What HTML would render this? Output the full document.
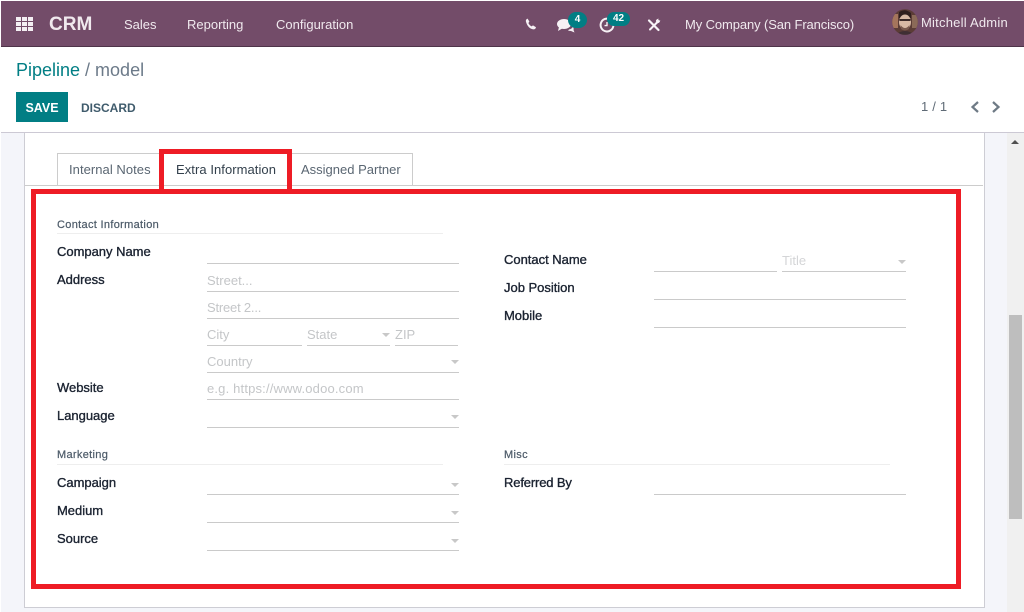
<!DOCTYPE html>
<html><head><meta charset="utf-8">
<style>
html,body{margin:0;padding:0;width:1024px;height:612px;overflow:hidden;background:#fff;font-family:"Liberation Sans",sans-serif;}
.a,.t,.l,.p,.u,.c,.h,.n{position:absolute;}
.t,.l,.p,.h,.n{white-space:nowrap;line-height:16px;}
.n{color:#f0e9ee;font-size:13px;top:17px;}
.l{font-size:13px;color:#1a2230;-webkit-text-stroke:.35px #1a2230;letter-spacing:-.02px;}
.p{font-size:13px;color:#c4c6c8;}
.h{font-size:11px;color:#4c5a68;-webkit-text-stroke:.2px #4c5a68;letter-spacing:.32px;}
.u{height:1px;background:#cacaca;}
.c{width:0;height:0;border-left:4px solid transparent;border-right:4px solid transparent;border-top:4px solid #c8c8c8;}
.r{position:absolute;background:#ee1c25;}
.tab{position:absolute;top:153px;height:32px;box-sizing:border-box;border:1px solid #ccc;border-bottom:0;background:#fff;}
</style></head>
<body>
<!-- navbar -->
<div class="a" style="left:1px;top:1px;width:1023px;height:45px;background:#734c69;border-bottom:1px solid #4e3449;"></div>
<svg class="a" style="left:16px;top:17px" width="18" height="15" viewBox="0 0 18 15" fill="#f4eff3">
<rect x="0" y="0" width="5" height="4"/><rect x="6" y="0" width="5" height="4"/><rect x="12" y="0" width="5" height="4"/>
<rect x="0" y="5" width="5" height="4"/><rect x="6" y="5" width="5" height="4"/><rect x="12" y="5" width="5" height="4"/>
<rect x="0" y="10" width="5" height="4"/><rect x="6" y="10" width="5" height="4"/><rect x="12" y="10" width="5" height="4"/>
</svg>
<div class="n" style="left:49px;top:14px;font-size:19px;line-height:22px;font-weight:bold;">CRM</div>
<div class="n" style="left:124px;">Sales</div>
<div class="n" style="left:187px;">Reporting</div>
<div class="n" style="left:276px;">Configuration</div>
<svg class="a" style="left:525px;top:18px" width="12" height="12" viewBox="0 0 12 12"><path d="M2.6 .6 L4.4 3.6 L3.4 5 Q4.4 7.4 6.6 8.4 L8 7.4 L11 9.2 Q10.4 11.4 8.6 11.4 Q2.6 10.6 .8 3 Q.9 1.2 2.6 .6Z" fill="#f6f1f5"/></svg>
<svg class="a" style="left:557px;top:18px" width="18" height="15" viewBox="0 0 18 15" fill="#f6f1f5"><ellipse cx="7" cy="6" rx="7" ry="5"/><path d="M2 9 L1 13 L6 10Z"/><path d="M12 11.5 Q15 11 16 8.5 Q17 11 16.5 12 L17.5 14.5 L14 13 Q12.5 13 11 12.5Z"/></svg>
<div class="a" style="left:568px;top:12px;width:19px;height:16px;border-radius:9px;background:#017e84;"></div>
<div class="a" style="left:568px;top:12px;width:19px;text-align:center;color:#fff;font-size:10px;font-weight:bold;line-height:15px;">4</div>
<svg class="a" style="left:599px;top:17px" width="16" height="16" viewBox="0 0 16 16" fill="none" stroke="#f6f1f5" stroke-width="2"><path d="M11 2.4 A6.4 6.4 0 1 0 14.4 8"/><path d="M8 5 V8.6 H5.5" stroke-width="1.4"/></svg>
<div class="a" style="left:607px;top:12px;width:23px;height:14px;border-radius:8px;background:#017e84;color:#fff;font-size:10px;font-weight:bold;line-height:13px;text-align:center;">42</div>
<svg class="a" style="left:647px;top:18px" width="14" height="14" viewBox="0 0 14 14"><path d="M2 2.5 L11.5 12" stroke="#f8f4f7" stroke-width="2.2" stroke-linecap="round"/><path d="M11.5 3 L3 11.5" stroke="#f8f4f7" stroke-width="2" stroke-linecap="round"/><path d="M8.8 3.2 Q9.2 .8 12 .8 L10.8 2.2 L11.8 3.2 L13.2 2 Q13.2 4.8 10.6 5.2Z" fill="#f8f4f7"/></svg>
<div class="n" style="left:685px;letter-spacing:-.11px;">My Company (San Francisco)</div>
<svg class="a" style="left:892px;top:9px" width="26" height="26" viewBox="0 0 26 26"><defs><clipPath id="av"><circle cx="13" cy="13" r="12.8"/></clipPath></defs><g clip-path="url(#av)"><rect width="26" height="26" fill="#5b3c36"/><rect x="0" y="5" width="6" height="14" fill="#a5755c"/><rect x="20" y="6" width="6" height="13" fill="#8b6a58"/><path d="M7 3 Q13 -1 19 4 L19 9 L7 9Z" fill="#2f1f1d"/><ellipse cx="13" cy="13" rx="6" ry="7.5" fill="#d8b9a4"/><rect x="7.5" y="10" width="11" height="2" fill="#3b2a28"/><path d="M8.5 16 Q13 22 17.5 16 L17 20 Q13 23 9 20Z" fill="#7a5a4e"/><path d="M3 26 Q13 18 23 26Z" fill="#3f2f34"/></g></svg>
<div class="n" style="left:921px;top:15px;letter-spacing:.22px;">Mitchell Admin</div>

<!-- control panel -->
<div class="t" style="left:16px;top:59px;font-size:18px;line-height:22px;color:#017e84;">Pipeline<span style="color:#6c7a89;"> / model</span></div>
<div class="a" style="left:16px;top:92px;width:52px;height:30px;background:#017e84;"></div>
<div class="t" style="left:16px;top:100px;width:52px;text-align:center;color:#fff;font-size:12.5px;font-weight:bold;">SAVE</div>
<div class="t" style="left:81px;top:100px;color:#3f5b6c;font-size:12px;font-weight:bold;">DISCARD</div>
<div class="t" style="left:921px;top:99px;color:#5f6b76;font-size:13px;letter-spacing:.2px;">1 / 1</div>
<svg class="a" style="left:969px;top:100px" width="34" height="14" viewBox="0 0 34 14" fill="none" stroke="#6e7a85" stroke-width="2.2"><path d="M9 2 L3.5 7 L9 12"/><path d="M24 2 L29.5 7 L24 12"/></svg>

<!-- content bg -->
<div class="a" style="left:1px;top:132px;width:1023px;height:1px;background:#ccc9d4;"></div>
<div class="a" style="left:1px;top:133px;width:1006px;height:479px;background:#f4f5fa;"></div>
<div class="a" style="left:1007px;top:133px;width:17px;height:479px;background:#f0f0f0;"></div>
<div class="a" style="left:1009px;top:315px;width:13px;height:204px;background:#bebebe;"></div>
<div class="a" style="left:1011px;top:140px;width:0;height:0;border-left:4px solid transparent;border-right:4px solid transparent;border-bottom:4px solid #505050;"></div>

<!-- sheet -->
<div class="a" style="left:24px;top:133px;width:959px;height:474px;background:#fff;border:1px solid #cdcdd4;border-top:0;"></div>
<div class="a" style="left:25px;top:185px;width:958px;height:1px;background:#ccc;"></div>

<!-- tabs -->
<div class="tab" style="left:57px;width:103px;"></div>
<div class="tab" style="left:290px;width:123px;"></div>
<div class="t" style="left:69px;top:162px;font-size:13px;color:#5a6672;letter-spacing:.05px;">Internal Notes</div>
<div class="t" style="left:176px;top:162px;font-size:13px;color:#33404c;letter-spacing:.06px;">Extra Information</div>
<div class="t" style="left:301px;top:162px;font-size:13px;color:#5a6672;">Assigned Partner</div>

<!-- red annotations -->
<div class="r" style="left:159px;top:149px;width:133px;height:5px;"></div>
<div class="r" style="left:159px;top:149px;width:5px;height:41px;"></div>
<div class="r" style="left:287px;top:149px;width:5px;height:41px;"></div>
<div class="r" style="left:31px;top:189px;width:930px;height:5px;"></div>
<div class="r" style="left:31px;top:584px;width:930px;height:5px;"></div>
<div class="r" style="left:31px;top:189px;width:5px;height:400px;"></div>
<div class="r" style="left:956px;top:189px;width:5px;height:400px;"></div>

<!-- section: contact info -->
<div class="h" style="left:57px;top:217px;">Contact Information</div>
<div class="u" style="left:57px;top:233px;width:386px;background:#eeeeee;"></div>

<div class="l" style="left:57px;top:244px;">Company Name</div>
<div class="u" style="left:207px;top:263px;width:252px;"></div>

<div class="l" style="left:57px;top:272px;">Address</div>
<div class="p" style="left:207px;top:273px;">Street...</div>
<div class="u" style="left:207px;top:291px;width:252px;"></div>
<div class="p" style="left:207px;top:300px;letter-spacing:-.2px;">Street 2...</div>
<div class="u" style="left:207px;top:318px;width:252px;"></div>

<div class="p" style="left:207px;top:327px;">City</div>
<div class="u" style="left:207px;top:345px;width:95px;"></div>
<div class="p" style="left:307px;top:327px;">State</div>
<div class="c" style="left:382px;top:333px;"></div>
<div class="u" style="left:307px;top:345px;width:83px;"></div>
<div class="p" style="left:395px;top:327px;">ZIP</div>
<div class="u" style="left:395px;top:345px;width:63px;"></div>

<div class="p" style="left:207px;top:354px;">Country</div>
<div class="c" style="left:451px;top:360px;"></div>
<div class="u" style="left:207px;top:372px;width:252px;"></div>

<div class="l" style="left:57px;top:380px;">Website</div>
<div class="p" style="left:207px;top:381px;letter-spacing:.17px;">e.g. https://www.odoo.com</div>
<div class="u" style="left:207px;top:399px;width:252px;"></div>

<div class="l" style="left:57px;top:408px;">Language</div>
<div class="c" style="left:451px;top:415px;"></div>
<div class="u" style="left:207px;top:427px;width:252px;"></div>

<!-- right col -->
<div class="l" style="left:504px;top:252px;">Contact Name</div>
<div class="u" style="left:654px;top:271px;width:123px;"></div>
<div class="p" style="left:782px;top:253px;color:#d4d5d7;">Title</div>
<div class="c" style="left:898px;top:260px;"></div>
<div class="u" style="left:782px;top:271px;width:124px;"></div>

<div class="l" style="left:504px;top:280px;">Job Position</div>
<div class="u" style="left:654px;top:299px;width:252px;"></div>

<div class="l" style="left:504px;top:308px;">Mobile</div>
<div class="u" style="left:654px;top:327px;width:252px;"></div>

<!-- marketing -->
<div class="h" style="left:57px;top:447px;">Marketing</div>
<div class="u" style="left:57px;top:464px;width:386px;background:#eeeeee;"></div>
<div class="l" style="left:57px;top:475px;">Campaign</div>
<div class="c" style="left:451px;top:483px;"></div>
<div class="u" style="left:207px;top:494px;width:252px;"></div>
<div class="l" style="left:57px;top:503px;">Medium</div>
<div class="c" style="left:451px;top:511px;"></div>
<div class="u" style="left:207px;top:522px;width:252px;"></div>
<div class="l" style="left:57px;top:531px;">Source</div>
<div class="c" style="left:451px;top:539px;"></div>
<div class="u" style="left:207px;top:550px;width:252px;"></div>

<!-- misc -->
<div class="h" style="left:504px;top:447px;">Misc</div>
<div class="u" style="left:504px;top:464px;width:386px;background:#eeeeee;"></div>
<div class="l" style="left:504px;top:475px;letter-spacing:-.15px;">Referred By</div>
<div class="u" style="left:654px;top:494px;width:252px;"></div>
</body></html>
